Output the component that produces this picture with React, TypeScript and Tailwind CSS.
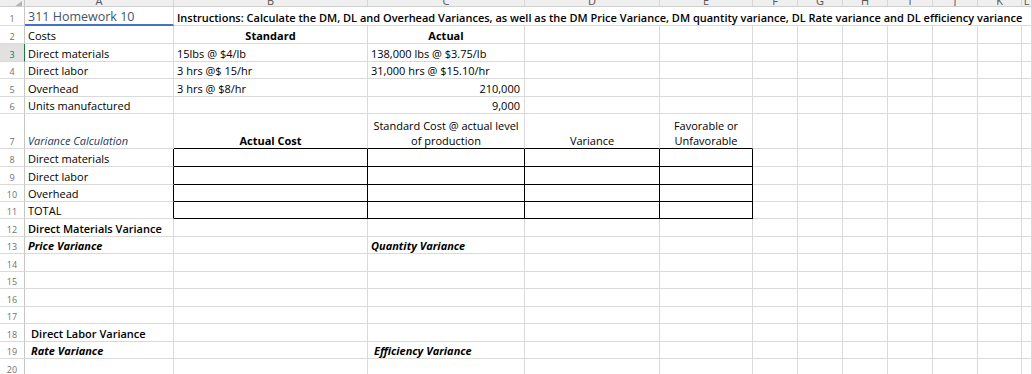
import type { ReactNode } from 'react';

// column tracks: row numbers, A..K, then the clipped L column
const COLS = 'grid-cols-[25px_149px_194px_157px_135px_93px_45px_45px_45px_45px_45px_44px_1fr]';
const LETTERS = ['A', 'B', 'C', 'D', 'E', 'F', 'G', 'H', 'I', 'J', 'K', 'L'];

type Cell = {
  t?: ReactNode;
  cls?: string;
  span?: 1 | 11;
  wrap?: boolean;
  rb?: boolean; // black right border
  bb?: boolean; // black bottom border
};

function Row({ n, h, cells = [], sel }: { n: number; h: string; cells?: Cell[]; sel?: boolean }) {
  const filled = [...cells];
  let used = filled.reduce((s, c) => s + (c.span ?? 1), 0);
  while (used < 12) {
    filled.push({});
    used++;
  }
  return (
    <div className={`grid ${COLS} ${h}`}>
      <div
        className={`flex items-end justify-center border-b border-b-[#dadada] border-r text-[9px] leading-[12px] ${
          sel ? 'border-r-[#217346] bg-[#e1e1e1] text-[#217346]' : 'border-r-[#c6c6c6] text-[#707070]'
        }`}
      >
        {n}
      </div>
      {filled.map((c, i) => (
        <div
          key={i}
          className={`flex items-end border-b border-r px-[3px] leading-[15px] ${
            c.wrap ? 'whitespace-normal text-center' : 'whitespace-nowrap'
          } ${c.rb ? 'border-r-black' : 'border-r-[#dadada]'} ${c.bb ? 'border-b-black' : 'border-b-[#dadada]'} ${
            c.span === 11 ? 'col-span-11' : ''
          } ${c.cls ?? ''}`}
        >
          {c.t}
        </div>
      ))}
    </div>
  );
}

// four bordered cells (B..E) of the variance table
const boxRow = (): Cell[] => [{ rb: true }, { rb: true, bb: true }, { rb: true, bb: true }, { rb: true, bb: true }, { rb: true, bb: true }];

export default function App() {
  return (
    <div className="h-[374px] w-[1032px] overflow-hidden bg-white font-['Open_Sans',sans-serif] text-[11px] text-black">
      {/* column header strip, cut off at the top */}
      <div className={`grid ${COLS} h-[7px] overflow-hidden border-b border-b-[#d0d0d0] bg-[#efefef]`}>
        <div className="relative border-r border-r-[#c6c6c6]">
          <svg className="absolute right-[2px] bottom-0" width="8" height="6" viewBox="0 0 8 6">
            <polygon points="8,0 8,6 0,6" fill="#b4b4b4" />
          </svg>
        </div>
        {LETTERS.map(l => (
          <div key={l} className="flex justify-center border-r border-r-[#d6d6d6] text-[11px] leading-[7px] text-[#555]">
            <span className="-translate-y-[3px]">{l}</span>
          </div>
        ))}
      </div>

      <Row
        n={1}
        h="h-[19px]"
        cells={[
          { t: '311 Homework 10', cls: 'text-[12.5px] font-medium text-[#44546a] border-b-2 !border-b-[#4472c4]' },
          {
            t: 'Instructions:  Calculate the DM, DL and Overhead Variances, as well as the DM Price Variance, DM quantity variance, DL Rate variance and DL efficiency variance',
            span: 11,
            cls: 'font-semibold',
          },
        ]}
      />
      <Row
        n={2}
        h="h-[18px]"
        cells={[
          { t: 'Costs' },
          { t: 'Standard', cls: 'justify-center font-bold' },
          { t: 'Actual', cls: 'justify-center font-bold' },
        ]}
      />
      <Row n={3} h="h-[18px]" sel cells={[{ t: 'Direct materials' }, { t: '15lbs @ $4/lb' }, { t: '138,000 lbs @ $3.75/lb' }]} />
      <Row n={4} h="h-[17px]" cells={[{ t: 'Direct labor' }, { t: '3 hrs @$ 15/hr' }, { t: '31,000 hrs @ $15.10/hr' }]} />
      <Row n={5} h="h-[18px]" cells={[{ t: 'Overhead' }, { t: '3 hrs @ $8/hr' }, { t: '210,000', cls: 'justify-end pr-[4px]' }]} />
      <Row n={6} h="h-[17px]" cells={[{ t: 'Units manufactured' }, {}, { t: '9,000', cls: 'justify-end pr-[4px]' }]} />
      <Row
        n={7}
        h="h-[35px]"
        cells={[
          { t: 'Variance Calculation', cls: 'italic text-[#203864]' },
          { t: 'Actual Cost', cls: 'justify-center font-bold', bb: true },
          { t: 'Standard Cost @ actual level of production', wrap: true, cls: 'justify-center', bb: true },
          { t: 'Variance', cls: 'justify-center', bb: true },
          { t: 'Favorable or Unfavorable', wrap: true, cls: 'justify-center', bb: true },
        ]}
      />
      {(
        [
          [8, 'Direct materials', 'h-[18px]'],
          [9, 'Direct labor', 'h-[18px]'],
          [10, 'Overhead', 'h-[17px]'],
          [11, 'TOTAL', 'h-[17px]'],
        ] as const
      ).map(([n, label, h]) => {
        const cells = boxRow();
        cells[0] = { t: label, rb: true };
        return <Row key={n} n={n} h={h} cells={cells} />;
      })}
      <Row n={12} h="h-[18px]" cells={[{ t: 'Direct Materials Variance', cls: 'font-semibold' }]} />
      <Row
        n={13}
        h="h-[17px]"
        cells={[{ t: 'Price Variance', cls: 'font-bold italic' }, {}, { t: 'Quantity Variance', cls: 'font-bold italic' }]}
      />
      <Row n={14} h="h-[18px]" />
      <Row n={15} h="h-[17px]" />
      <Row n={16} h="h-[18px]" />
      <Row n={17} h="h-[17px]" />
      <Row n={18} h="h-[18px]" cells={[{ t: 'Direct Labor Variance', cls: 'font-semibold pl-[6px]' }]} />
      <Row
        n={19}
        h="h-[17px]"
        cells={[
          { t: 'Rate Variance', cls: 'font-bold italic pl-[6px]' },
          {},
          { t: 'Efficiency Variance', cls: 'font-bold italic pl-[6px]' },
        ]}
      />
      <Row n={20} h="h-[18px]" />
    </div>
  );
}
